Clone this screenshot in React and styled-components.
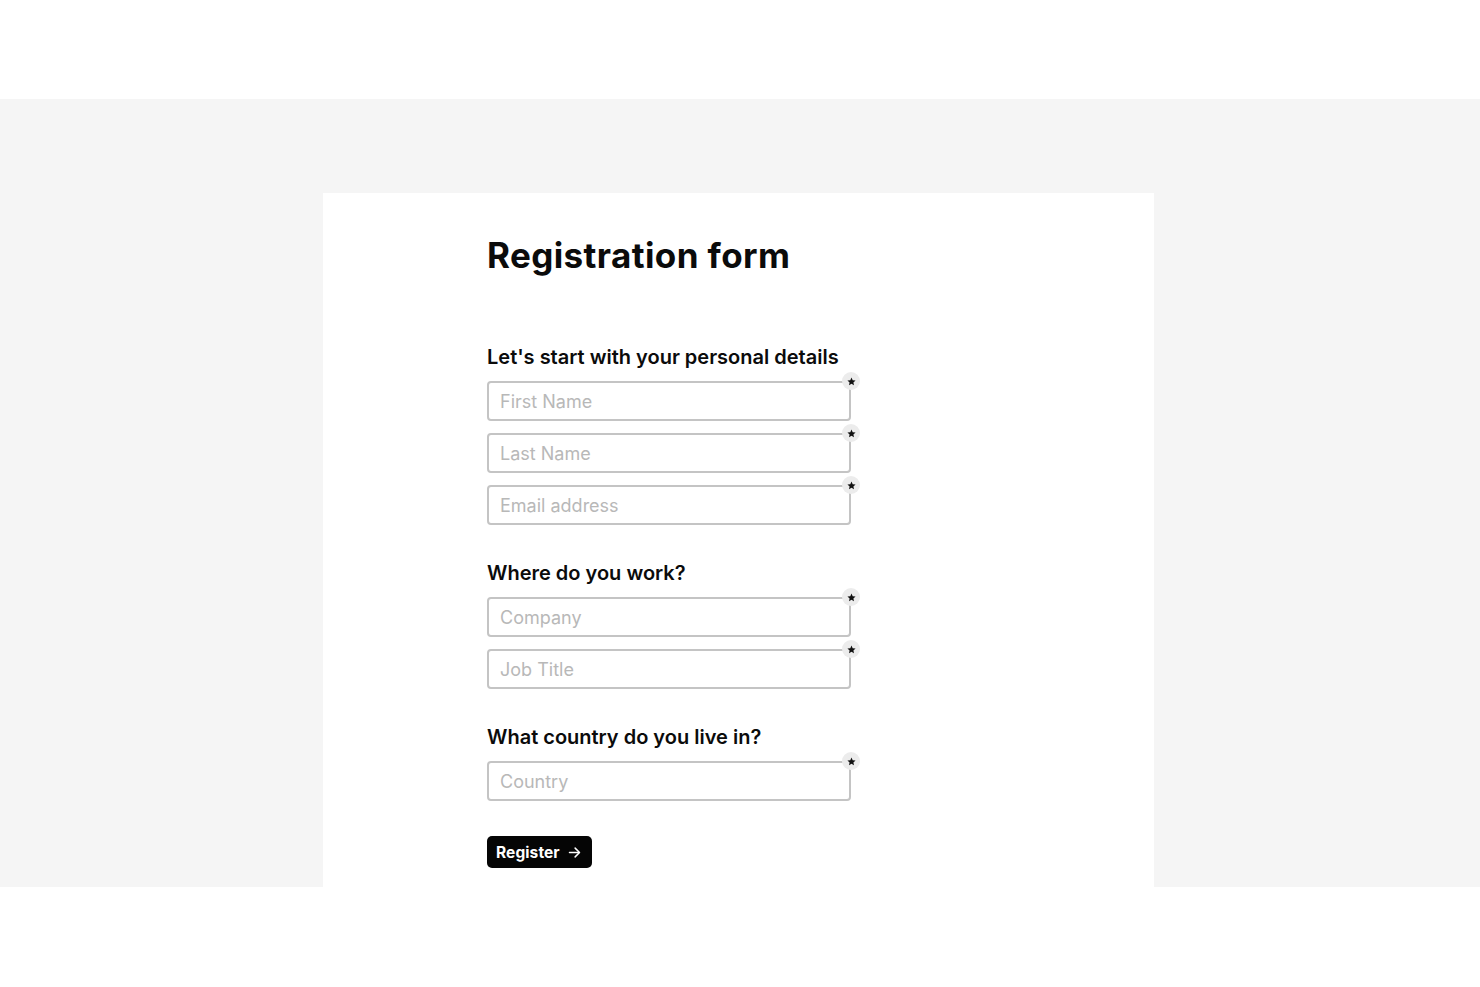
import React from "react";
import styled, { createGlobalStyle } from "styled-components";

const Global = createGlobalStyle`
  html, body { margin: 0; padding: 0; background: #ffffff; }
  body { font-family: "Inter", "Liberation Sans", sans-serif; color: #0b0b0b; }
  * { box-sizing: border-box; }
`;

const Band = styled.div`
  margin-top: 99px;
  height: 788px;
  background: #f5f5f5;
  overflow: hidden;
  padding-top: 94px;
`;

const Card = styled.main`
  margin-left: 323px;
  width: 831px;
  min-height: 760px;
  background: #ffffff;
  padding: 39px 0 0 164px;
`;

const Title = styled.h1`
  margin: 0 0 65px;
  font-size: 35px;
  font-weight: 700;
  letter-spacing: 0.4px;
  line-height: 46px;
`;

const Form = styled.form`
  display: flex;
  flex-direction: column;
  width: 364px;
`;

const Section = styled.fieldset`
  border: 0;
  margin: 0 0 34px;
  padding: 0;
  display: flex;
  flex-direction: column;
  gap: 12px;
`;

const Legend = styled.h2`
  margin: 0 0 -2px;
  font-size: 20px;
  font-weight: 600;
  line-height: 28px;
  letter-spacing: 0;
`;

const FieldWrap = styled.div`
  position: relative;
  width: 364px;
`;

const Input = styled.input`
  display: block;
  width: 100%;
  height: 40px;
  border: 2px solid #c4c4c4;
  border-radius: 4px;
  padding: 0 11px;
  font-family: inherit;
  font-size: 18px;
  color: #222;
  background: #fff;
  outline: none;
  &::placeholder { color: #b8b8b8; }
`;

const Badge = styled.span`
  position: absolute;
  top: -9px;
  right: -9px;
  width: 18px;
  height: 18px;
  border-radius: 50%;
  background: #ececec;
  display: flex;
  align-items: center;
  justify-content: center;
`;

const Button = styled.button`
  align-self: flex-start;
  display: inline-flex;
  align-items: center;
  gap: 7px;
  height: 32px;
  margin-top: 1px;
  padding: 0 10px 0 9px;
  background: #050505;
  color: #fff;
  border: 0;
  border-radius: 5px;
  font-family: inherit;
  font-size: 15.5px;
  font-weight: 700;
  letter-spacing: 0.1px;
`;

const Star = () => (
  <svg width="9" height="9" viewBox="0 0 24 24" aria-hidden="true">
    <path
      d="M12 1.5l3.2 7 7.6.8-5.7 5.1 1.6 7.5L12 18l-6.7 3.9 1.6-7.5L1.2 9.3l7.6-.8z"
      fill="#111"
    />
  </svg>
);

const Field = ({ placeholder }) => (
  <FieldWrap>
    <Input placeholder={placeholder} />
    <Badge>
      <Star />
    </Badge>
  </FieldWrap>
);

const sections = [
  { title: "Let's start with your personal details", fields: ["First Name", "Last Name", "Email address"] },
  { title: "Where do you work?", fields: ["Company", "Job Title"] },
  { title: "What country do you live in?", fields: ["Country"] },
];

export default function App() {
  return (
    <>
      <Global />
      <Band>
        <Card>
          <Title>Registration form</Title>
          <Form onSubmit={(e) => e.preventDefault()}>
            {sections.map((s) => (
              <Section key={s.title}>
                <Legend>{s.title}</Legend>
                {s.fields.map((f) => (
                  <Field key={f} placeholder={f} />
                ))}
              </Section>
            ))}
            <Button type="submit">
              Register
              <svg width="15" height="15" viewBox="0 0 24 24" fill="none" stroke="#fff" strokeWidth="2.4" strokeLinecap="round" strokeLinejoin="round">
                <path d="M4 12h15" />
                <path d="M13 5l7 7-7 7" />
              </svg>
            </Button>
          </Form>
        </Card>
      </Band>
    </>
  );
}
